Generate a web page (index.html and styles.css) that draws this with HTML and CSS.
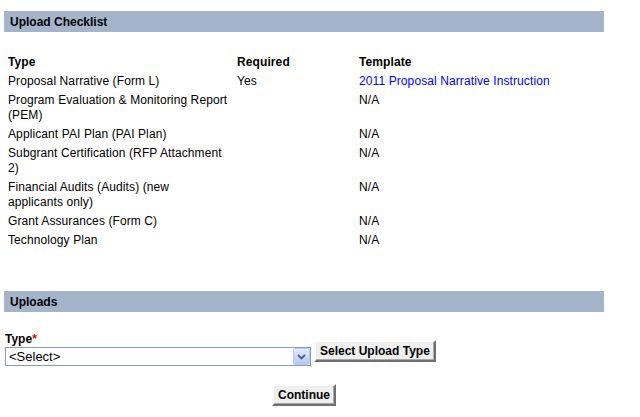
FILE: index.html
```html
<!DOCTYPE html>
<html>
<head>
<meta charset="utf-8">
<link rel="stylesheet" href="styles.css">
</head>
<body>
<div class="page">
  <div class="bar">Upload Checklist</div>
  <table class="checklist">
    <tr><th class="c1">Type</th><th class="c2">Required</th><th class="c3">Template</th></tr>
    <tr><td class="c1">Proposal Narrative (Form L)</td><td>Yes</td><td><a href="#">2011 Proposal Narrative Instruction</a></td></tr>
    <tr><td class="c1">Program Evaluation &amp; Monitoring Report (PEM)</td><td></td><td>N/A</td></tr>
    <tr><td class="c1">Applicant PAI Plan (PAI Plan)</td><td></td><td>N/A</td></tr>
    <tr><td class="c1">Subgrant Certification (RFP Attachment 2)</td><td></td><td>N/A</td></tr>
    <tr><td class="c1">Financial Audits (Audits) (new<br>applicants only)</td><td></td><td>N/A</td></tr>
    <tr><td class="c1">Grant Assurances (Form C)</td><td></td><td>N/A</td></tr>
    <tr><td class="c1">Technology Plan</td><td></td><td>N/A</td></tr>
  </table>
  <div class="bar bar-uploads">Uploads</div>
  <div class="field">
    <div class="label">Type<span class="req">*</span></div>
    <div class="row">
      <div class="select-wrap">
        <select class="select"><option>&lt;Select&gt;</option></select>
        <span class="arrow"><svg width="9" height="6" viewBox="0 0 9 6"><path d="M1 1 L4.5 4.5 L8 1" fill="none" stroke="#4d6185" stroke-width="1.8"/></svg></span>
      </div>
      <button class="btn btn-select">Select Upload Type</button>
    </div>
  </div>
  <div class="actions"><button class="btn">Continue</button></div>
</div>
</body>
</html>
```
FILE: styles.css
```css
html, body { margin: 0; padding: 0; background: #fff; }
body { font-family: "Liberation Sans", Arial, sans-serif; font-size: 12px; color: #000; }
.page { width: 600px; padding: 11px 0 0 4px; }
.bar {
  background: #a3b4cb;
  height: 21px;
  line-height: 22px;
  font-weight: bold;
  padding-left: 6px;
}
.checklist { border-collapse: collapse; margin-top: 21px; width: 600px; letter-spacing: 0.1px; }
.checklist th, .checklist td {
  text-align: left;
  vertical-align: top;
  padding: 2px 4px 2px 4px;
  line-height: 15px;
}
.checklist .c1 { width: 223px; padding-right: 2px; }
.checklist .c2 { width: 114px; }
.checklist a { color: #0000ff; text-decoration: none; }
.bar-uploads { margin-top: 41px; }
.field { margin-top: 20px; }
.label { font-weight: bold; line-height: 15px; padding-left: 1px; }
.req { color: #e00000; }
.row { display: flex; align-items: flex-start; gap: 3px; }
.select-wrap { position: relative; width: 306px; height: 19px; margin-left: 1px; }
.select {
  appearance: none;
  -webkit-appearance: none;
  width: 306px;
  height: 19px;
  border: 1px solid #7f9db9;
  border-radius: 0;
  background: #fff;
  font: 13px "Liberation Sans", Arial, sans-serif;
  padding: 0 0 0 3px;
  color: #000;
  margin: 0;
  display: block;
}
.arrow {
  position: absolute;
  right: 1px;
  top: 1px;
  width: 17px;
  height: 17px;
  background: linear-gradient(#e1eafb, #b4c8f0);
  border: 1px solid #bccdef;
  box-sizing: border-box;
  display: flex;
  align-items: center;
  justify-content: center;
  border-radius: 2px;
}
.btn {
  font: bold 12px "Liberation Sans", Arial, sans-serif;
  color: #000;
  background: #efefef;
  border: 2px solid;
  border-color: #fff #6f6f6f #6f6f6f #fff;
  box-shadow: inset -1px -1px 0 #a8a8a8;
  padding: 1px 4px 2px 4px;
  height: 22px;
  margin: 0;
}
.btn-select { margin-top: -7px; }
.actions { text-align: center; margin-top: 18px; }
```
